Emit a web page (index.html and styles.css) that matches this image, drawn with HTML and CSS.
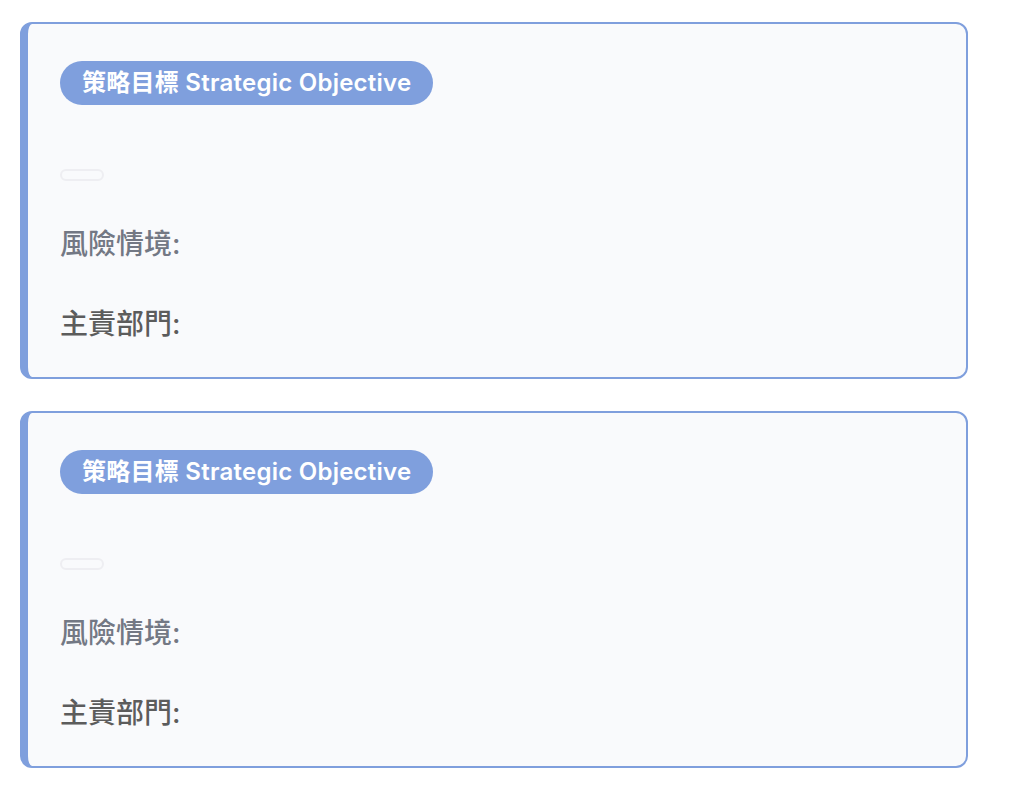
FILE: index.html
```html
<!DOCTYPE html>
<html lang="zh-Hant">
<head>
<meta charset="utf-8">
<link rel="stylesheet" href="styles.css">
</head>
<body>
<div class="list">
  <div class="card">
    <span class="badge">策略目標 Strategic Objective</span>
    <div class="pill"></div>
    <div class="label label-risk">風險情境:</div>
    <div class="label label-dept">主責部門:</div>
  </div>
  <div class="card">
    <span class="badge">策略目標 Strategic Objective</span>
    <div class="pill"></div>
    <div class="label label-risk">風險情境:</div>
    <div class="label label-dept">主責部門:</div>
  </div>
</div>
</body>
</html>
```
FILE: styles.css
```css
html, body {
  margin: 0;
  padding: 0;
  background: #ffffff;
}
body {
  font-family: Inter, "Noto Sans CJK TC", "Noto Sans", sans-serif;
}
.list {
  padding: 22px 0 0 20px;
  display: flex;
  flex-direction: column;
  gap: 32px;
}
.card {
  box-sizing: border-box;
  width: 948px;
  height: 357px;
  border: 2px solid #7f9fdd;
  border-left-width: 8px;
  border-radius: 12px;
  background: #f9fafc;
  padding: 37px 32px 0;
  display: flex;
  flex-direction: column;
  align-items: flex-start;
}
.badge {
  display: inline-block;
  height: 44px;
  line-height: 44px;
  padding: 0 22px;
  border-radius: 22px;
  background: #7f9fdd;
  color: #ffffff;
  font-size: 24px;
  font-weight: 600;
  letter-spacing: 0.25px;
  white-space: nowrap;
}
.pill {
  box-sizing: border-box;
  width: 44px;
  height: 12px;
  border: 2px solid #eeeef2;
  border-radius: 8px;
  margin-top: 64px;
}
.label {
  font-size: 28px;
  line-height: 34px;
  font-weight: 500;
}
.label-risk {
  color: #737884;
  margin-top: 46px;
}
.label-dept {
  color: #5c5c5c;
  margin-top: 46px;
}
```
